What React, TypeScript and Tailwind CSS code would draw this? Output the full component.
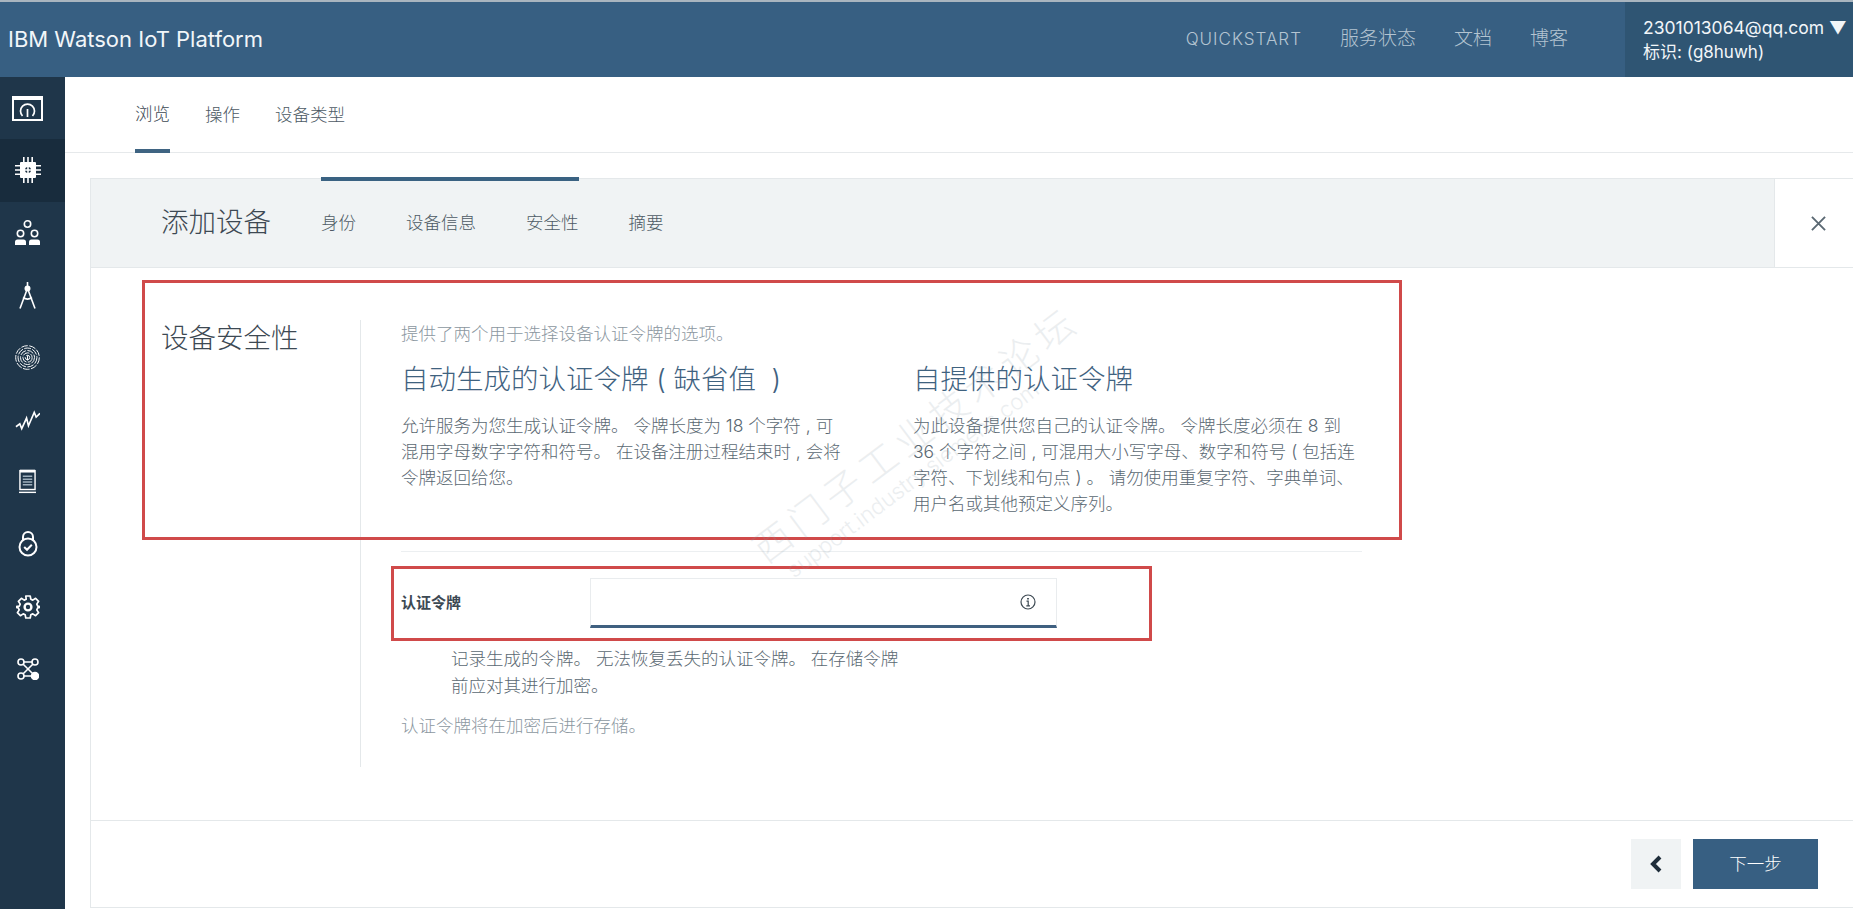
import React from "react";

const cjk = "font-['Inter','Noto_Sans_CJK_SC',sans-serif]";

const IconGauge = () => (
  <svg width="31" height="25" viewBox="0 0 31 25" fill="none" stroke="white">
    <rect x="1" y="2" width="29" height="22" strokeWidth="2" />
    <path d="M0 2h31" strokeWidth="4" />
    <path d="M10.500 20a7 7 0 1 1 10 0" strokeWidth="1.700" />
    <path d="M15.500 13v8" strokeWidth="1.700" />
  </svg>
);

const IconChip = () => (
  <svg width="26" height="26" viewBox="0 0 26 26" fill="white">
    <rect x="5" y="5" width="16" height="16" rx="1" />
    <circle cx="13" cy="13" r="3" fill="#182c3d" />
    <path d="M8 0h1.600v26H8zM12.200 0h1.600v26h-1.600zM16.400 0H18v26h-1.600zM0 8h26v1.600H0zM0 12.200h26v1.600H0zM0 16.400h26V18H0z" />
  </svg>
);

const IconGroup = () => (
  <svg width="25" height="25" viewBox="0 0 25 25" fill="none" stroke="white" strokeWidth="1.600">
    <circle cx="12.500" cy="4" r="3.200" />
    <circle cx="5.500" cy="13.500" r="3.200" />
    <circle cx="19.500" cy="13.500" r="3.200" />
    <path d="M0 25v-3a2.500 2.500 0 0 1 2.500-2.500h6A2.500 2.500 0 0 1 11 22v3zM14 25v-3a2.500 2.500 0 0 1 2.500-2.500h6A2.500 2.500 0 0 1 25 22v3z" fill="white" stroke="none" />
  </svg>
);

const IconCompass = () => (
  <svg width="17" height="27" viewBox="0 0 17 27" fill="none" stroke="white" strokeWidth="1.600">
    <path d="M8.500 0v4" />
    <circle cx="8.500" cy="6.500" r="2.200" fill="white" />
    <path d="M7.500 9 1 26.500M9.500 9 16 26.500M4 15.500c3 2.200 6 2.200 9 0" />
  </svg>
);

const IconFingerprint = () => (
  <svg width="25" height="25" viewBox="0 0 26 26" fill="none" stroke="white" strokeWidth="1" strokeDasharray="7 1.500">
    <circle cx="13" cy="13" r="12.300" />
    <circle cx="13" cy="13" r="9.800" />
    <circle cx="13" cy="13" r="7.300" />
    <circle cx="13" cy="13" r="4.800" />
    <circle cx="13" cy="13" r="2.300" />
    <path d="M13 11v5" />
  </svg>
);

const IconPulse = () => (
  <svg width="25" height="24" viewBox="0 0 26 24" fill="none" stroke="white" strokeWidth="1.700">
    <path d="M1 19l4-3 2 5 5-11 2 8 6-14 2 5 4-4" />
  </svg>
);

const IconDoc = () => (
  <svg width="17" height="25" viewBox="0 0 18 25" fill="none" stroke="white">
    <rect x="1" y="1" width="16" height="20" strokeWidth="1.500" />
    <path d="M1 1.500h16" strokeWidth="3" />
    <path d="M0 24h18" strokeWidth="1.500" />
    <path d="M4 7h10M4 10h10M4 13h10M4 16h10" stroke="#9fb0bd" strokeWidth="1.600" />
  </svg>
);

const IconLock = () => (
  <svg width="20" height="26" viewBox="0 0 20 26" fill="none" stroke="white" strokeWidth="2">
    <path d="M5 9V6a5 5 0 0 1 10 0v3" />
    <circle cx="10" cy="16" r="8.500" />
    <path d="M6.200 16l2.800 2.800 4.800-5" />
  </svg>
);

const IconGear = () => (
  <svg width="24" height="24" viewBox="0 0 24 24" fill="none" stroke="white" strokeWidth="1.700" strokeLinejoin="round">
    <path d="M9.800 1h4.400l.6 3.200 2 .9 2.800-1.800 3 3-1.800 2.800.9 2 3.200.6v.6l-3.200.6-.9 2 1.800 2.800-3 3-2.800-1.800-2 .9-.6 3.200H9.800l-.6-3.200-2-.9-2.800 1.800-3-3 1.800-2.800-.9-2L.1 12.300v-.6l3.200-.6.9-2-1.800-2.800 3-3 2.800 1.800 2-.9z" />
    <circle cx="12" cy="12" r="3.400" strokeWidth="2.400" />
  </svg>
);

const IconNodes = () => (
  <svg width="22" height="22" viewBox="0 0 22 22" fill="none" stroke="white" strokeWidth="1.600">
    <circle cx="4" cy="4" r="3" />
    <circle cx="18" cy="4" r="3" />
    <circle cx="4" cy="18" r="3" />
    <circle cx="18" cy="18" r="3.500" fill="white" />
    <path d="M7 4h8M6.200 6.200l9.600 9.600M6.200 15.800l9.600-9.600M7 18h7" />
  </svg>
);

const sideIcons = [
  <IconGauge />,
  <IconChip />,
  <IconGroup />,
  <IconCompass />,
  <IconFingerprint />,
  <IconPulse />,
  <IconDoc />,
  <IconLock />,
  <IconGear />,
  <IconNodes />,
];

const App: React.FC = () => {
  return (
    <div className={`relative flex h-[909px] w-[1853px] flex-col overflow-hidden bg-white ${cjk}`}>
      <header className="flex h-[77px] shrink-0 items-center border-t-2 border-[#a9b5bf] bg-[#375f82] text-white">
        <div className="pl-[8px] text-[22px] font-normal text-[#f2f6f9]">IBM Watson IoT Platform</div>
        <div className="ml-auto flex items-center gap-[38px] pr-[57px] text-[19px] font-light text-[#b4c4d1]">
          <span className="text-[17px] tracking-[1px]">QUICKSTART</span>
          <span>服务状态</span>
          <span>文档</span>
          <span>博客</span>
        </div>
        <div className="flex h-full w-[228px] flex-col justify-center bg-[#2f5573] pl-[18px] text-[17px] leading-[25px] text-[#f2f6f9]">
          <div className="text-[17.500px] whitespace-nowrap">2301013064@qq.com ▼</div>
          <div>标识: (g8huwh)</div>
        </div>
      </header>

      <div className="flex min-h-0 flex-1">
        <aside className="flex w-[65px] shrink-0 flex-col bg-[#1f364a]">
          {sideIcons.map((icon, i) => (
            <div
              key={i}
              className={`flex h-[62.300px] shrink-0 items-center justify-center pr-[10px] ${i === 1 ? "bg-[#182c3d]" : ""}`}
            >
              {icon}
            </div>
          ))}
        </aside>

        <main className="flex min-w-0 flex-1 flex-col">
          <nav className="flex h-[76px] shrink-0 items-stretch gap-[35px] border-b border-[#e6e9eb] pl-[70px] text-[17.500px] font-light text-[#4d5a64]">
            <span className="-mb-px flex items-center border-b-4 border-[#3f6482] pt-[3px] text-[#3d4953]">浏览</span>
            <span className="flex items-center pt-[1px]">操作</span>
            <span className="flex items-center pt-[1px]">设备类型</span>
          </nav>

          <section className="mt-[25px] ml-[25px] flex h-[730px] flex-col border-t border-l border-[#e4e8ea]">
            <div className="flex h-[89px] shrink-0 border-b border-[#e4e8ea]">
              <div className="flex flex-1 items-center bg-[#f0f3f4] pl-[70px]">
                <h1 className="w-[160px] text-[27.500px] font-light text-[#3d4953]">添加设备</h1>
                <div className="flex h-full gap-[50px] text-[17.500px] font-light text-[#4d5a64]">
                  <span className="relative flex items-center">
                    身份
                    <span className="absolute top-[-2px] left-0 h-[4px] w-[258px] bg-[#3a6282]" />
                  </span>
                  <span className="flex items-center">设备信息</span>
                  <span className="flex items-center">安全性</span>
                  <span className="flex items-center">摘要</span>
                </div>
              </div>
              <div className="flex w-[79px] shrink-0 items-center justify-center border-l border-[#e4e8ea] pl-[8px]">
                <svg width="15" height="15" viewBox="0 0 16 16" stroke="#5a6872" strokeWidth="2">
                  <path d="M1 1l14 14M15 1L1 15" />
                </svg>
              </div>
            </div>

            <div className="flex h-[552px] shrink-0 pt-[52px] pl-[70px]">
              <h2 className="w-[199px] shrink-0 text-[27.500px] leading-[36px] font-light text-[#3d4953]">设备安全性</h2>
              <div className="h-[447px] w-[1002px] shrink-0 border-l border-[#e4e8ea] pl-[40px]">
                <div className="w-[961px]">
                  <p className="pt-[1px] text-[17.500px] leading-[26px] font-light text-[#8c979f]">提供了两个用于选择设备认证令牌的选项。</p>
                  <div className="mt-[12px] flex h-[193px] border-b border-[#eceff1]">
                    <div className="w-[512px]">
                      <h3 className="text-[27.500px] leading-[40px] font-light text-[#3f627f]">自动生成的认证令牌 ( 缺省值&nbsp; )</h3>
                      <p className="mt-[14px] text-[17.500px] leading-[26px] font-light whitespace-nowrap text-[#5a6872]">
                        允许服务为您生成认证令牌。 令牌长度为 18 个字符 , 可<br />
                        混用字母数字字符和符号。 在设备注册过程结束时 , 会将<br />
                        令牌返回给您。
                      </p>
                    </div>
                    <div className="flex-1">
                      <h3 className="text-[27.500px] leading-[40px] font-light text-[#3f627f]">自提供的认证令牌</h3>
                      <p className="mt-[14px] text-[17.500px] leading-[26px] font-light whitespace-nowrap text-[#5a6872]">
                        为此设备提供您自己的认证令牌。 令牌长度必须在 8 到<br />
                        36 个字符之间 , 可混用大小写字母、数字和符号 ( 包括连<br />
                        字符、下划线和句点 ) 。 请勿使用重复字符、字典单词、<br />
                        用户名或其他预定义序列。
                      </p>
                    </div>
                  </div>
                  <div className="mt-[26px] flex items-center">
                    <label className="w-[189px] text-[15px] font-bold text-[#3d4953]">认证令牌</label>
                    <div className="flex h-[50px] w-[467px] items-center justify-end border border-b-[3px] border-[#e9ecee] border-b-[#3f6080] pr-[20px]">
                      <svg width="16" height="16" viewBox="0 0 16 16" fill="none" stroke="#3d4953" strokeWidth="1.200">
                        <circle cx="8" cy="8" r="7" />
                        <path d="M6.500 7.200H8.200V11.800M6.300 11.800H10" />
                        <path d="M8 4v1.600" strokeWidth="1.800" />
                      </svg>
                    </div>
                  </div>
                  <p className="mt-[17px] pl-[50px] text-[17.500px] leading-[27px] font-light text-[#5a6872]">
                    记录生成的令牌。 无法恢复丢失的认证令牌。 在存储令牌<br />
                    前应对其进行加密。
                  </p>
                  <p className="mt-[14px] text-[17.500px] leading-[26px] font-light text-[#8c979f]">认证令牌将在加密后进行存储。</p>
                </div>
              </div>
            </div>

            <div className="flex flex-1 items-start justify-end gap-[12px] border-t border-b border-[#e4e8ea] pt-[18px] pr-[35px]">
              <button className="flex h-[50px] w-[50px] items-center justify-center bg-[#f0f3f4]">
                <svg width="14" height="18" viewBox="0 0 14 18" fill="none" stroke="#1f2d3a" strokeWidth="4">
                  <path d="M11 2L4 9l7 7" />
                </svg>
              </button>
              <button className="flex h-[50px] w-[125px] items-center justify-center bg-[#375f82] text-[17.500px] font-light text-white">下一步</button>
            </div>
          </section>
        </main>
      </div>

      {/* red annotation boxes drawn over the screenshot */}
      <div className="pointer-events-none absolute top-[280px] left-[142px] h-[260px] w-[1260px] border-[3px] border-[#d04a4a]" />
      <div className="pointer-events-none absolute top-[566px] left-[391px] h-[75px] w-[761px] border-[3px] border-[#d04a4a]" />

      {/* forum watermark */}
      <div className="pointer-events-none absolute top-[410px] left-[725px] origin-center -rotate-[37deg] text-[#8a9aa5] opacity-[0.16]">
        <div className="text-[38px] leading-[44px] font-light tracking-[6px] whitespace-nowrap">西门子工业技术论坛</div>
        <div className="pl-[14px] text-[22px] leading-[24px] font-light whitespace-nowrap">support.industry.siemens.com</div>
      </div>
    </div>
  );
};

export default App;
